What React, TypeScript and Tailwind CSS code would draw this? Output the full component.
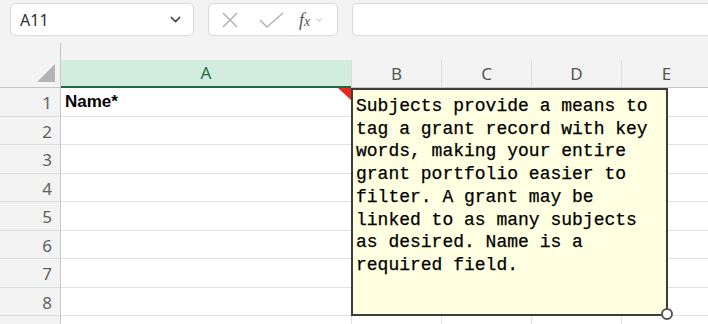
import { ChevronDown } from 'lucide-react'

const rows = [1, 2, 3, 4, 5, 6, 7, 8, 9]
const cols = [
  { id: 'A', w: 'w-[290px]' },
  { id: 'B', w: 'w-[90px]' },
  { id: 'C', w: 'w-[90px]' },
  { id: 'D', w: 'w-[90px]' },
  { id: 'E', w: 'w-[90px]' },
]

function Toolbar() {
  return (
    <div className="h-[43px] flex items-start pt-[3px] gap-[14px] pl-[10px]">
      <div className="w-[184px] h-[33px] bg-white border border-[#d9d9d9] rounded-[5px] flex items-center justify-between pl-[9px] pr-[9px]">
        <span className="text-[16px] text-[#333] font-['Noto_Sans',sans-serif]">A11</span>
        <ChevronDown className="w-[17px] h-[17px] text-[#444]" strokeWidth={2} />
      </div>
      <div className="w-[130px] h-[33px] bg-white border border-[#d9d9d9] rounded-[5px] flex items-center pl-[12px]">
        <svg width="18" height="18" viewBox="0 0 18 18" className="text-[#b5b5b5]">
          <path d="M2 2 L16 16 M16 2 L2 16" stroke="currentColor" strokeWidth="1.6" fill="none" />
        </svg>
        <svg width="26" height="18" viewBox="0 0 26 18" className="ml-[20px] text-[#b5b5b5]">
          <path d="M1 9 L8 16 L24 2" stroke="currentColor" strokeWidth="1.6" fill="none" />
        </svg>
        <span className="ml-[14px] text-[18px] italic text-[#555] font-['Liberation_Serif',serif] leading-none">
          f<span className="text-[14px]">x</span>
        </span>
        <ChevronDown className="ml-[4px] w-[10px] h-[10px] text-[#aaa]" strokeWidth={2} />
      </div>
      <div className="flex-1 h-[33px] bg-white border border-[#d9d9d9] border-r-0 rounded-l-[5px]" />
    </div>
  )
}

export default function App() {
  return (
    <div className="relative w-[708px] h-[324px] overflow-hidden bg-[#f3f3f3] font-['Noto_Sans',sans-serif]">
      <Toolbar />
      <div className="flex">
        {/* row headers */}
        <div className="w-[61px] shrink-0 border-r border-[#c6c6c6]">
          <div className="h-[17px]" />
          <div className="h-[28px] border-b border-[#c6c6c6] relative">
            <svg width="18" height="18" viewBox="0 0 18 18" className="absolute left-[37px] top-[4px]">
              <polygon points="18,0 18,18 0,18" fill="#b4b4b4" />
            </svg>
          </div>
          {rows.map(r => (
            <div key={r} className="h-[28.5px] border-b border-[#dcdcdc] flex items-center justify-end pr-[8px] pt-[2px] text-[17px] text-[#5f5f5f]">
              {r < 9 ? r : ''}
            </div>
          ))}
        </div>
        {/* columns */}
        <div className="flex-1">
          <div className="h-[17px]" />
          <div className="flex h-[28px]">
            {cols.map(c => (
              <div
                key={c.id}
                className={`${c.w} shrink-0 flex items-center justify-center text-[17px] ${
                  c.id === 'A'
                    ? 'bg-[#d2ecdd] text-[#1e6b41] border-b-2 border-[#1e6b41]'
                    : 'text-[#555] border-l border-[#dcdcdc] border-b border-b-[#c6c6c6]'
                }`}
              >
                {c.id}
              </div>
            ))}
          </div>
          {rows.map(r => (
            <div key={r} className="flex h-[28.5px] bg-white">
              {cols.map((c, i) => (
                <div
                  key={c.id}
                  className={`${c.w} shrink-0 border-b border-[#e1e1e1] ${i > 0 ? 'border-l' : ''} border-l-[#e1e1e1] relative flex items-center`}
                >
                  {r === 1 && c.id === 'A' && (
                    <>
                      <span className="pl-[4px] text-[17px] font-bold text-black font-['Liberation_Sans',sans-serif]">Name*</span>
                      <svg width="13" height="12" viewBox="0 0 13 12" className="absolute right-0 top-0">
                        <polygon points="0,0 13,0 13,12" fill="#e8261d" />
                      </svg>
                    </>
                  )}
                </div>
              ))}
            </div>
          ))}
        </div>
      </div>

      {/* comment */}
      <div className="absolute left-[351px] top-[88px] w-[317px] h-[228px] bg-[#ffffe1] border-2 border-[#3c3c3c] pl-[3px] pt-[5px]">
        <p className="w-[296px] text-[18px] leading-[22.7px] text-black font-['Liberation_Mono',monospace] [-webkit-text-stroke:0.25px_black]">
          Subjects provide a means to tag a grant record with key words, making your entire grant portfolio easier to
          filter. A grant may be linked to as many subjects as desired. Name is a required field.
        </p>
      </div>
      <div className="absolute left-[661px] top-[308px] w-[12px] h-[12px] rounded-full bg-white border-2 border-[#555]" />
    </div>
  )
}
